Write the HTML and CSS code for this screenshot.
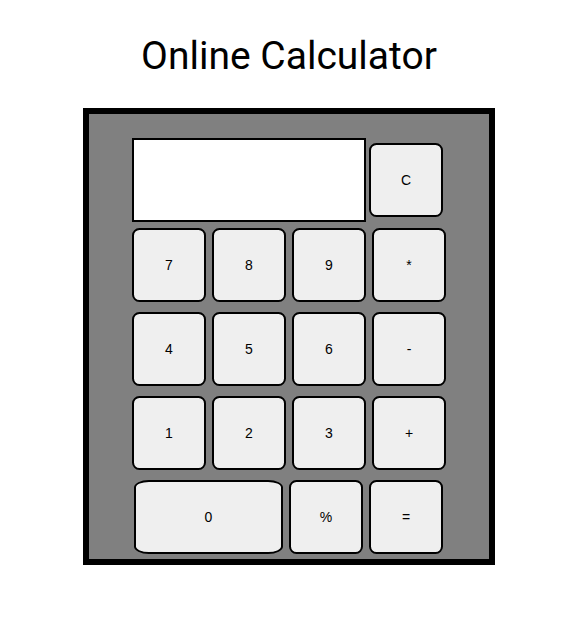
FILE: index.html
```html
<!DOCTYPE html>
<html>
<head>
<meta charset="utf-8">
<title>Online Calculator</title>
<link rel="stylesheet" href="styles.css">
</head>
<body>
<div class="page">
  <h1 class="title">Online Calculator</h1>
  <div class="calc">
    <div class="row row-top">
      <div class="display"></div>
      <button class="key">C</button>
    </div>
    <div class="row">
      <button class="key">7</button>
      <button class="key">8</button>
      <button class="key">9</button>
      <button class="key">*</button>
    </div>
    <div class="row">
      <button class="key">4</button>
      <button class="key">5</button>
      <button class="key">6</button>
      <button class="key">-</button>
    </div>
    <div class="row">
      <button class="key">1</button>
      <button class="key">2</button>
      <button class="key">3</button>
      <button class="key">+</button>
    </div>
    <div class="row row-bottom">
      <button class="key key-wide">0</button>
      <button class="key">%</button>
      <button class="key">=</button>
    </div>
  </div>
</div>
</body>
</html>
```
FILE: styles.css
```css
html, body {
  margin: 0;
  padding: 0;
  background: #ffffff;
}

.page {
  width: 578px;
  display: flex;
  flex-direction: column;
  align-items: center;
  padding-top: 35px;
}

.title {
  margin: 0;
  font-family: Roboto, "Liberation Sans", sans-serif;
  font-weight: 400;
  font-size: 39px;
  line-height: 43px;
  color: #000;
}

.calc {
  margin-top: 30px;
  box-sizing: border-box;
  width: 412px;
  height: 457px;
  border: 6px solid #000;
  background: #808080;
  padding: 24px 0 5px 43px;
  display: flex;
  flex-direction: column;
  gap: 10px;
}

.row {
  display: flex;
  align-items: center;
  gap: 6px;
}

.row-top {
  gap: 3px;
  margin-bottom: -4px;
}

.row-bottom {
  padding-left: 2px;
}

.display {
  width: 234px;
  height: 84px;
  box-sizing: border-box;
  border: 2px solid #000;
  background: #fff;
}

.key {
  width: 74px;
  height: 74px;
  box-sizing: border-box;
  margin: 0;
  padding: 0;
  border: 2px solid #000;
  border-radius: 10%;
  background: #efefef;
  color: #000;
  font-family: "Liberation Sans", Arial, sans-serif;
  font-size: 14px;
}

.key-wide {
  width: 149px;
}
```
